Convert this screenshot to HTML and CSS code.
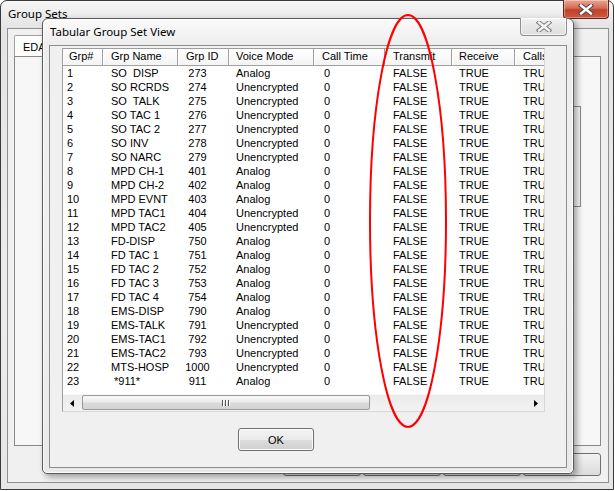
FILE: index.html
```html
<!DOCTYPE html>
<html>
<head>
<meta charset="utf-8">
<title>Tabular Group Set View</title>
<link rel="stylesheet" href="styles.css">
</head>
<body>
<div class="desk">
  <div class="win back">
    <div class="titlebar back-title">
      <span class="title">Group Sets</span>
      <div class="close red">
        <svg width="16" height="11" viewBox="0 0 16 11"><path d="M3 1.5 L13 9.5 M13 1.5 L3 9.5" stroke="#4a4a4a" stroke-width="4.4" stroke-linecap="square"/><path d="M3 1.5 L13 9.5 M13 1.5 L3 9.5" stroke="#ffffff" stroke-width="2.4" stroke-linecap="square"/></svg>
      </div>
    </div>
    <div class="client back-client">
      <div class="tabs"><div class="tab">EDA</div></div>
      <div class="page"><div class="side-ctrl"></div></div>
      <div class="btnrow"><div class="bbtn"></div><div class="bbtn"></div><div class="bbtn"></div><div class="bbtn"></div></div>
    </div>
  </div>

  <div class="win dlg">
    <div class="titlebar dlg-title">
      <span class="title">Tabular Group Set View</span>
      <div class="close grey">
        <svg width="16" height="11" viewBox="0 0 16 11"><path d="M3 1.5 L13 9.5 M13 1.5 L3 9.5" stroke="#7a7a7a" stroke-width="4.4" stroke-linecap="square"/><path d="M3 1.5 L13 9.5 M13 1.5 L3 9.5" stroke="#f4f4f4" stroke-width="2.4" stroke-linecap="square"/></svg>
      </div>
    </div>
    <div class="client dlg-client">
      <div class="list">
        <div class="lhead">
          <div class="h c1">Grp#</div>
          <div class="h c2">Grp Name</div>
          <div class="h c3">Grp ID</div>
          <div class="h c4">Voice Mode</div>
          <div class="h c5">Call Time</div>
          <div class="h c6">Transmit</div>
          <div class="h c7">Receive</div>
          <div class="h c8">Calls</div>
        </div>
        <div class="lbody">
          <div class="row"><span class="c1">1</span><span class="c2">SO  DISP</span><span class="c3">273</span><span class="c4">Analog</span><span class="c5">0</span><span class="c6">FALSE</span><span class="c7">TRUE</span><span class="c8">TRUE</span></div>
          <div class="row"><span class="c1">2</span><span class="c2">SO RCRDS</span><span class="c3">274</span><span class="c4">Unencrypted</span><span class="c5">0</span><span class="c6">FALSE</span><span class="c7">TRUE</span><span class="c8">TRUE</span></div>
          <div class="row"><span class="c1">3</span><span class="c2">SO  TALK</span><span class="c3">275</span><span class="c4">Unencrypted</span><span class="c5">0</span><span class="c6">FALSE</span><span class="c7">TRUE</span><span class="c8">TRUE</span></div>
          <div class="row"><span class="c1">4</span><span class="c2">SO TAC 1</span><span class="c3">276</span><span class="c4">Unencrypted</span><span class="c5">0</span><span class="c6">FALSE</span><span class="c7">TRUE</span><span class="c8">TRUE</span></div>
          <div class="row"><span class="c1">5</span><span class="c2">SO TAC 2</span><span class="c3">277</span><span class="c4">Unencrypted</span><span class="c5">0</span><span class="c6">FALSE</span><span class="c7">TRUE</span><span class="c8">TRUE</span></div>
          <div class="row"><span class="c1">6</span><span class="c2">SO INV</span><span class="c3">278</span><span class="c4">Unencrypted</span><span class="c5">0</span><span class="c6">FALSE</span><span class="c7">TRUE</span><span class="c8">TRUE</span></div>
          <div class="row"><span class="c1">7</span><span class="c2">SO NARC</span><span class="c3">279</span><span class="c4">Unencrypted</span><span class="c5">0</span><span class="c6">FALSE</span><span class="c7">TRUE</span><span class="c8">TRUE</span></div>
          <div class="row"><span class="c1">8</span><span class="c2">MPD CH-1</span><span class="c3">401</span><span class="c4">Analog</span><span class="c5">0</span><span class="c6">FALSE</span><span class="c7">TRUE</span><span class="c8">TRUE</span></div>
          <div class="row"><span class="c1">9</span><span class="c2">MPD CH-2</span><span class="c3">402</span><span class="c4">Analog</span><span class="c5">0</span><span class="c6">FALSE</span><span class="c7">TRUE</span><span class="c8">TRUE</span></div>
          <div class="row"><span class="c1">10</span><span class="c2">MPD EVNT</span><span class="c3">403</span><span class="c4">Analog</span><span class="c5">0</span><span class="c6">FALSE</span><span class="c7">TRUE</span><span class="c8">TRUE</span></div>
          <div class="row"><span class="c1">11</span><span class="c2">MPD TAC1</span><span class="c3">404</span><span class="c4">Unencrypted</span><span class="c5">0</span><span class="c6">FALSE</span><span class="c7">TRUE</span><span class="c8">TRUE</span></div>
          <div class="row"><span class="c1">12</span><span class="c2">MPD TAC2</span><span class="c3">405</span><span class="c4">Unencrypted</span><span class="c5">0</span><span class="c6">FALSE</span><span class="c7">TRUE</span><span class="c8">TRUE</span></div>
          <div class="row"><span class="c1">13</span><span class="c2">FD-DISP</span><span class="c3">750</span><span class="c4">Analog</span><span class="c5">0</span><span class="c6">FALSE</span><span class="c7">TRUE</span><span class="c8">TRUE</span></div>
          <div class="row"><span class="c1">14</span><span class="c2">FD TAC 1</span><span class="c3">751</span><span class="c4">Analog</span><span class="c5">0</span><span class="c6">FALSE</span><span class="c7">TRUE</span><span class="c8">TRUE</span></div>
          <div class="row"><span class="c1">15</span><span class="c2">FD TAC 2</span><span class="c3">752</span><span class="c4">Analog</span><span class="c5">0</span><span class="c6">FALSE</span><span class="c7">TRUE</span><span class="c8">TRUE</span></div>
          <div class="row"><span class="c1">16</span><span class="c2">FD TAC 3</span><span class="c3">753</span><span class="c4">Analog</span><span class="c5">0</span><span class="c6">FALSE</span><span class="c7">TRUE</span><span class="c8">TRUE</span></div>
          <div class="row"><span class="c1">17</span><span class="c2">FD TAC 4</span><span class="c3">754</span><span class="c4">Analog</span><span class="c5">0</span><span class="c6">FALSE</span><span class="c7">TRUE</span><span class="c8">TRUE</span></div>
          <div class="row"><span class="c1">18</span><span class="c2">EMS-DISP</span><span class="c3">790</span><span class="c4">Analog</span><span class="c5">0</span><span class="c6">FALSE</span><span class="c7">TRUE</span><span class="c8">TRUE</span></div>
          <div class="row"><span class="c1">19</span><span class="c2">EMS-TALK</span><span class="c3">791</span><span class="c4">Unencrypted</span><span class="c5">0</span><span class="c6">FALSE</span><span class="c7">TRUE</span><span class="c8">TRUE</span></div>
          <div class="row"><span class="c1">20</span><span class="c2">EMS-TAC1</span><span class="c3">792</span><span class="c4">Unencrypted</span><span class="c5">0</span><span class="c6">FALSE</span><span class="c7">TRUE</span><span class="c8">TRUE</span></div>
          <div class="row"><span class="c1">21</span><span class="c2">EMS-TAC2</span><span class="c3">793</span><span class="c4">Unencrypted</span><span class="c5">0</span><span class="c6">FALSE</span><span class="c7">TRUE</span><span class="c8">TRUE</span></div>
          <div class="row"><span class="c1">22</span><span class="c2">MTS-HOSP</span><span class="c3">1000</span><span class="c4">Unencrypted</span><span class="c5">0</span><span class="c6">FALSE</span><span class="c7">TRUE</span><span class="c8">TRUE</span></div>
          <div class="row"><span class="c1">23</span><span class="c2"> *911*</span><span class="c3">911</span><span class="c4">Analog</span><span class="c5">0</span><span class="c6">FALSE</span><span class="c7">TRUE</span><span class="c8">TRUE</span></div>
        </div>
        <div class="hscroll">
          <div class="sbtn"><svg width="4" height="7" viewBox="0 0 4 7"><path d="M4 0 L0 3.5 L4 7 Z" fill="#000"/></svg></div>
          <div class="track"><div class="thumb"><span class="grip"></span><span class="grip"></span><span class="grip"></span></div></div>
          <div class="sbtn"><svg width="4" height="7" viewBox="0 0 4 7"><path d="M0 0 L4 3.5 L0 7 Z" fill="#000"/></svg></div>
        </div>
      </div>
      <div class="okrow"><div class="ok">OK</div></div>
    </div>
  </div>

  <svg class="mark" width="615" height="491" viewBox="0 0 615 491"><ellipse cx="408" cy="221" rx="38" ry="206" fill="none" stroke="#ff0000" stroke-width="2"/></svg>
</div>
</body>
</html>
```

FILE: styles.css
```css
* { box-sizing: border-box; }
html, body { margin: 0; padding: 0; background: #ffffff; }
body { font-family: "Liberation Sans", Arial, sans-serif; font-size: 11px; color: #000; }

.desk { position: relative; width: 615px; height: 491px; overflow: hidden; background: #ffffff; }

.win { position: absolute; display: flex; flex-direction: column; }

.back {
  left: 0; top: 0; width: 614px; height: 490px;
  border: 1px solid #3a3a3a;
  border-radius: 7px 7px 0 0;
  background: linear-gradient(180deg, #f6f6f6 0px, #e4e4e4 27px, #ececec 60%, #e6e6e6 100%);
  padding: 0 4px 6px 6px;
}

.titlebar { display: flex; align-items: flex-start; flex: none; }
.title { font-family: "Noto Sans", "Open Sans", sans-serif; font-size: 11.5px; color: #000; white-space: nowrap; }

.back-title { height: 27px; margin-left: -6px; margin-right: -4px; padding-left: 7px; padding-right: 4px; }
.back-title .title { padding-top: 5px; }

.close { margin-left: auto; display: flex; align-items: center; justify-content: center; border-radius: 0 0 4px 4px; }
.close.red {
  width: 46px; height: 19px; margin-top: -1px;
  border: 1px solid #5e2419; border-top: none;
  background: linear-gradient(180deg, #e9a894 0%, #d56b53 45%, #c2402a 55%, #cf5a43 100%);
  box-shadow: inset 0 0 0 1px rgba(255,255,255,0.35);
}

.client { background: #f0f0f0; }
.back-client {
  flex: 1;
  border: 1px solid #8f8f8f;
  display: flex; flex-direction: column;
  padding: 6px 7px 0 6px;
}
.tabs { display: flex; height: 21px; }
.tab { width: 40px; padding: 5px 0 0 8px; border: 1px solid #a0a0a0; border-bottom: none; background: #ffffff; border-radius: 2px 2px 0 0; }
.page { height: 390px; border: 1px solid #8a8a8a; background: #f7f7f7; display: flex; justify-content: flex-end; padding: 49px 19px 0 0; }
.side-ctrl { width: 9px; height: 101px; border: 1px solid #8a8a8a; }
.btnrow { display: flex; gap: 2px; margin-top: 7px; margin-left: 269px; }
.bbtn { width: 78px; height: 23px; border: 1px solid #707070; border-radius: 3px; background: linear-gradient(#f2f2f2, #dcdcdc); }

.dlg {
  left: 42px; top: 18px; width: 532px; height: 456px;
  border: 1px solid #5c5c5c;
  border-radius: 6px 6px 5px 5px;
  background: linear-gradient(180deg, #fbfbfb 0px, #ededed 26px, #f0f0f0 50%, #e9e9e9 100%);
  box-shadow: 3px 3px 6px rgba(0,0,0,0.35), inset 0 0 0 1px rgba(255,255,255,0.8);
  padding: 0 6px 5px 6px;
}
.dlg-title { height: 26px; margin-left: -6px; padding-left: 7px; }
.dlg-title .title { padding-top: 5px; }
.close.grey {
  width: 47px; height: 18px; margin-top: -1px;
  border: 1px solid #8f8f8f; border-top: none;
  background: linear-gradient(180deg, #f4f4f4 0%, #e6e6e6 50%, #dedede 100%);
  box-shadow: inset 0 0 0 1px rgba(255,255,255,0.7);
}

.dlg-client {
  flex: 1;
  border: 1px solid #8d8d8d;
  display: flex; flex-direction: column;
  padding: 2px 0 0 12px;
}

.list {
  width: 483px; height: 364px;
  border: 1px solid #9e9e9e;
  border-right-color: #d8d8d8; border-bottom-color: #d8d8d8;
  background: #ffffff;
  display: flex; flex-direction: column;
  overflow: hidden;
}

.lhead, .row {
  display: grid;
  grid-template-columns: 40px 75px 51px 85px 71px 67px 63px 60px;
  width: 512px;
}
.lhead { height: 17px; flex: none; }
.h {
  height: 17px; line-height: 15px;
  background: linear-gradient(#ffffff, #f4f4f4);
  border-right: 1px solid #a0a0a0;
  border-bottom: 1px solid #a0a0a0;
  box-shadow: inset 1px 1px 0 #ffffff;
  white-space: nowrap; overflow: hidden;
}
.h.c1 { padding-left: 6px; }
.h.c2, .h.c3, .h.c5, .h.c6, .h.c8 { padding-left: 8px; }
.h.c4, .h.c7 { padding-left: 7px; }

.lbody { flex: 1; overflow: hidden; }
.row { height: 14px; line-height: 14px; }
.row span { white-space: pre; overflow: hidden; }
.row .c1 { padding-left: 4px; }
.row .c2 { padding-left: 8px; }
.row .c3 { text-align: center; padding-right: 12px; }
.row .c4 { padding-left: 7px; }
.row .c5 { padding-left: 10px; }
.row .c6 { padding-left: 8px; }
.row .c7 { padding-left: 7px; }
.row .c8 { padding-left: 8px; }

.hscroll {
  height: 17px; flex: none;
  display: flex;
  background: linear-gradient(#ebebeb, #f3f3f3);
  border-top: 1px solid #f7f7f7;
}
.sbtn { width: 17px; display: flex; align-items: center; justify-content: center; }
.track { flex: 1; padding: 0 2px 1px 2px; display: flex; }
.thumb {
  width: 288px; height: 15px;
  border: 1px solid #9a9a9a; border-radius: 2px;
  background: linear-gradient(180deg, #f7f7f7 0%, #ececec 45%, #dadada 55%, #d4d4d4 100%);
  display: flex; justify-content: center; align-items: center; gap: 1px;
}
.grip { width: 1px; height: 6px; background: #555; box-shadow: 1px 0 0 #fff; margin-right: 1px; }

.okrow { display: flex; margin-top: 16px; padding-left: 176px; }
.ok {
  width: 76px; height: 23px;
  border: 1px solid #707070; border-radius: 3px;
  background: linear-gradient(180deg, #f2f2f2 0%, #ebebeb 50%, #dddddd 51%, #cfcfcf 100%);
  box-shadow: inset 0 0 0 1px #fcfcfc;
  display: flex; align-items: center; justify-content: center;
  font-size: 11px;
}

.mark { position: absolute; left: 0; top: 0; pointer-events: none; }
```
